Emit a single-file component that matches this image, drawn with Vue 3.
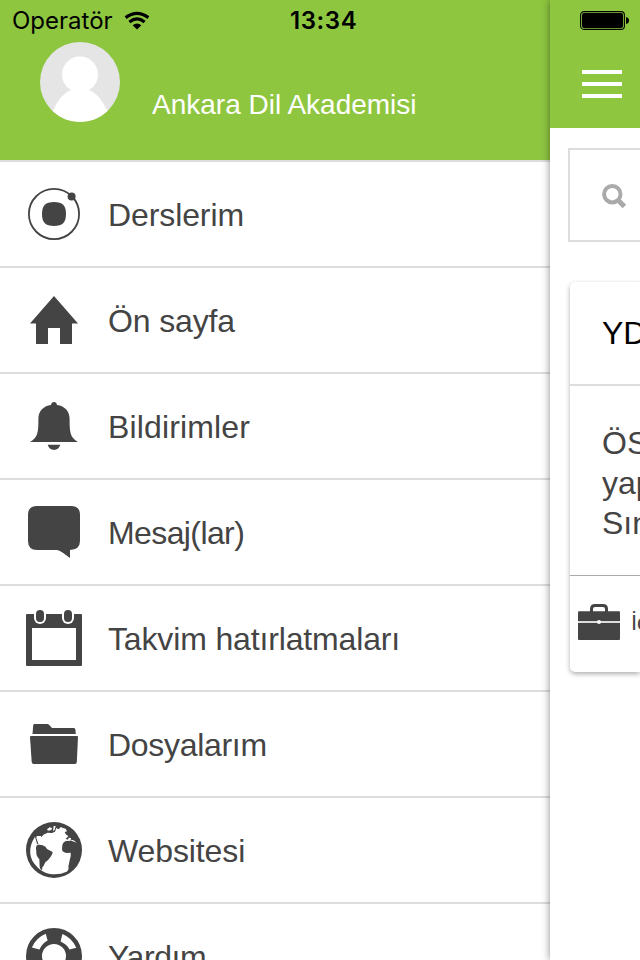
<script setup>
import { ref } from 'vue'

const active = ref(0)

// spacing is the letter spacing of the label in px
const items = ref([
  { icon: "courses", label: "Derslerim", spacing: -0.1 },
  { icon: "home", label: "Ön sayfa", spacing: -0.15 },
  { icon: "bell", label: "Bildirimler", spacing: 0.15 },
  { icon: "message", label: "Mesaj(lar)", spacing: -0.6 },
  { icon: "calendar", label: "Takvim hatırlatmaları", spacing: -0.15 },
  { icon: "folder", label: "Dosyalarım", spacing: -0.3 },
  { icon: "globe", label: "Websitesi", spacing: -0.1 },
  { icon: "help", label: "Yardım", spacing: -0.4 }
])

const courseLines = ["ÖS", "yap", "Sın"]
</script>

<template>
  <div class="screen">
    <aside class="drawer">
      <header class="drawerHeader">
        <div class="statusbar">
          <div class="carrier">
            <span>Operatör</span>
            <svg class="wifi" viewBox="0 0 26 20" width="26" height="20">
              <g fill="none" stroke="#000" stroke-width="3.2">
                <path d="M1.6 6.6 Q13 -2 24.4 6.6" />
                <path d="M5.4 10.9 Q13 5 20.6 10.9" />
              </g>
              <path d="M8.6 14.2 Q13 10.6 17.4 14.2 L13 18.4Z" />
            </svg>
          </div>
          <span class="time">13:34</span>
        </div>
        <div class="profile">
          <svg class="avatar" viewBox="0 0 80 80" width="80" height="80">
            <circle cx="40" cy="40" r="40" fill="#e5e5e5" />
            <circle cx="40" cy="32.5" r="18" fill="#fff" />
            <path d="M12.8 69.2 C18 57 25 49.5 33 47.5 H47 C55 49.5 62 57 67.4 69.2 A40 40 0 0 1 12.8 69.2Z" fill="#fff" />
          </svg>
          <span class="name">Ankara Dil Akademisi</span>
        </div>
      </header>
      <nav>
        <a v-for="(item, index) in items" :key="item.icon" class="row" @click="active = index">
          <svg v-if="item.icon === 'courses'" class="icon" viewBox="0 0 56 56">
            <circle cx="28" cy="28" r="25.1" fill="none" stroke="#444" stroke-width="1.8" />
            <circle cx="45.6" cy="10.4" r="4" />
            <path d="M28 16 C36.5 16 40 19.5 40 28 C40 36.5 36.5 40 28 40 C19.5 40 16 36.5 16 28 C16 19.5 19.5 16 28 16Z" />
          </svg>
          <svg v-else-if="item.icon === 'home'" class="icon" viewBox="0 0 56 56">
            <path d="M28 4 L52 31.6 H46 V52 H34 V36 H22 V52 H10 V31.6 H4Z" />
          </svg>
          <svg v-else-if="item.icon === 'bell'" class="icon" viewBox="0 0 56 56">
            <path d="M25 7 C25.3 3 30.7 3 31 7 C39 8 43.6 13.5 43.6 21 C43.6 34 44 39.5 52 44 H4 C12 39.5 12.4 34 12.4 21 C12.4 13.5 17 8 25 7Z" />
            <path d="M21.7 46.7 H34.3 C32.5 53.6 23.5 53.6 21.7 46.7Z" />
          </svg>
          <svg v-else-if="item.icon === 'message'" class="icon" viewBox="0 0 56 56">
            <path d="M11 2 H45 Q54 2 54 11 V37 Q54 45.5 44 46 V54 L36.5 48.5 Q33 46 31 46 H11 Q2 46 2 37 V11 Q2 2 11 2Z" />
          </svg>
          <svg v-else-if="item.icon === 'calendar'" class="icon" viewBox="0 0 56 56">
            <path fill-rule="evenodd" d="M1 4 H55 Q56 4 56 5 V55 Q56 56 55 56 H1 Q0 56 0 55 V5 Q0 4 1 4Z M6 18 H50 V50 H6Z" />
            <rect x="8" y="-2" width="12" height="16" rx="6" fill="#fff" />
            <rect x="36" y="-2" width="12" height="16" rx="6" fill="#fff" />
            <rect x="10" y="0" width="8" height="12" rx="4" />
            <rect x="38" y="0" width="8" height="12" rx="4" />
          </svg>
          <svg v-else-if="item.icon === 'folder'" class="icon" viewBox="0 0 56 56">
            <path d="M8.5 8 H21 Q22.5 8 23.5 9.3 L26 12 H48 Q49.2 12 49.4 13.5 L49.8 18 H6.5 L7.2 9.3 Q7.4 8 8.5 8Z" />
            <path d="M5 20 H51 Q52 20 52 21 L50.8 46 Q50.6 48 49 48 H7.5 Q6 48 5.7 46 L4 21 Q4 20 5 20Z" />
          </svg>
          <svg v-else-if="item.icon === 'globe'" class="icon" viewBox="0 0 168 168">
            <circle cx="84" cy="84" r="84" />
            <path fill="#fff" d="M27 44 C6 75 8 110 33 134 Q47 150 72 156 Q101 159 122 149 Q130 142 127 134 L131 115 Q136 100 134 92 L122 93 Q109 92 108 82 Q107 68 112 62 Q119 55 129 57 Q134 53 140 58 L152 62 L143 55 L134 53 L135 48 L128 47 L126 53 L119 50 L127 43 L120 37 L116 30 L123 28 L119 20 L111 18 L104 15 L98 22 L91 18 L87 29 L78 33 L65 32 L52 38 L46 46 L45 42 L32 42 L31 48 L38 68 L33 65Z" />
            <path fill="#fff" d="M63 22 L71 16 L78 18 L76 24 L66 26Z M83 12 L89 12 L86 23 L81 28Z" />
            <path d="M32 70 Q40 66 50 70 Q60 73 63 81 L80 90 Q80 97 74 104 Q66 116 58 121 Q53 133 49 136 L48 145 Q42 142 41 134 L40 112 Q30 102 31 91 Q28 77 32 70Z" />
            <path d="M117 32 L124 39 L128 37 L122 30Z" />
          </svg>
          <svg v-else class="icon" viewBox="0 0 56 56">
            <circle cx="28" cy="28" r="20" fill="none" stroke="#444" stroke-width="16" />
            <g fill="#fff">
              <path id="gap" d="M19.8 5.7 L21.6 12.4 Q16.5 14.8 13.4 21.4 L5.9 19.6 Q9.8 9.8 19.8 5.7Z" />
              <use href="#gap" transform="rotate(90 28 28)" />
              <use href="#gap" transform="rotate(180 28 28)" />
              <use href="#gap" transform="rotate(270 28 28)" />
            </g>
          </svg>
          <span :style="{ letterSpacing: item.spacing + 'px' }">{{ item.label }}</span>
        </a>
      </nav>
    </aside>
    <main class="page">
      <header class="pageHeader">
        <svg class="battery" viewBox="0 0 50 20" width="50" height="20">
          <rect x=".6" y=".6" width="43.8" height="17.8" rx="3.4" fill="none" stroke="#000" stroke-width="1.1" />
          <rect x="2" y="2" width="41" height="15" rx="2" />
          <path d="M46 6 Q49 6.5 49 9.5 Q49 12.5 46 13Z" />
        </svg>
        <button class="burger"><i></i><i></i><i></i></button>
      </header>
      <div class="search">
        <svg viewBox="0 0 26 26" width="26" height="26">
          <circle cx="10.3" cy="10.2" r="8.2" fill="none" stroke="#aaa" stroke-width="4" />
          <path d="M15.5 15.5 L22.4 22.4" stroke="#aaa" stroke-width="5" />
        </svg>
      </div>
      <section class="card">
        <h2>YD</h2>
        <div class="summary">
          <p v-for="line in courseLines" :key="line">{{ line }}</p>
        </div>
        <div class="cardFooter">
          <svg viewBox="0 0 42 36" width="42" height="36">
            <path d="M13.5 9 V5 Q13.5 1.5 17 1.5 H25 Q28.5 1.5 28.5 5 V9" fill="none" stroke="#444" stroke-width="3" />
            <rect y="7.3" width="42" height="28.7" rx="1" fill="#444" />
            <path d="M0 18 H42" stroke="#ddd" stroke-width="1.8" />
            <circle cx="21" cy="18" r="2" fill="#fff" />
          </svg>
          <span>İç</span>
        </div>
      </section>
    </main>
  </div>
</template>

<style>
body {
  margin: 0;
  overflow: hidden;
}
</style>

<style scoped>
.screen {
  display: flex;
  width: 640px;
  height: 960px;
  overflow: hidden;
  background-color: white;
  font-family: "Liberation Sans", Arial, sans-serif;
  color: #444;
}

.drawer {
  width: 550px;
  flex: none;
  overflow: hidden;
}

.drawerHeader {
  height: 160px;
  background-color: #8ec640;
}

.statusbar {
  display: flex;
  align-items: center;
  height: 42px;
  padding-left: 12px;
  font-family: Inter, sans-serif;
  font-size: 24px;
  line-height: 42px;
  color: black;
}

.carrier {
  display: flex;
  width: 278px;
  gap: 11px;
}

.wifi {
  margin-top: 11px;
}

.time {
  font-weight: 600;
  letter-spacing: 0.6px;
}

.profile {
  display: flex;
  gap: 32px;
  padding-left: 40px;
}

.name {
  padding-top: 47px;
  font-size: 28px;
  line-height: 32px;
  color: white;
}

.row {
  display: flex;
  align-items: center;
  gap: 26px;
  height: 104px;
  padding-left: 26px;
  border-top: 2px solid #ddd;
  font-size: 32px;
  cursor: pointer;
}

.row span {
  padding-top: 2px;
}

.icon {
  width: 56px;
  height: 56px;
  fill: #444;
  overflow: visible;
}

.page {
  width: 90px;
  flex: none;
  background-color: white;
  box-shadow: 0 0 8px rgba(0, 0, 0, 0.45);
}

.pageHeader {
  box-sizing: border-box;
  height: 128px;
  padding: 11px 0 0 30px;
  background-color: #8ec640;
}

.battery {
  display: block;
}

.burger {
  display: flex;
  flex-direction: column;
  gap: 8px;
  width: 40px;
  margin: 39px 0 0 2px;
  padding: 0;
  border: none;
  background: none;
}

.burger i {
  width: 40px;
  height: 4px;
  background-color: white;
}

.search {
  box-sizing: border-box;
  height: 94px;
  margin: 20px 0 0 18px;
  padding: 34px 0 0 32px;
  border: 2px solid #ddd;
  border-right: none;
}

.card {
  height: 390px;
  margin: 40px 0 0 20px;
  border-radius: 5px 0 0 5px;
  box-shadow: 0 2px 5px rgba(0, 0, 0, 0.32);
}

.card h2 {
  height: 102px;
  margin: 0;
  padding-left: 32px;
  border-bottom: 2px solid #ddd;
  font-size: 32px;
  font-weight: normal;
  line-height: 103px;
  color: black;
}

.summary {
  height: 152px;
  padding: 37px 0 0 32px;
  border-bottom: 1px solid #aaa;
}

.summary p {
  margin: 0;
  font-size: 32px;
  line-height: 40px;
}

.cardFooter {
  display: flex;
  align-items: flex-start;
  gap: 11px;
  padding: 28px 0 0 8px;
  font-size: 22px;
}

.cardFooter svg {
  flex: none;
}

.cardFooter span {
  padding-top: 6px;
}
</style>
